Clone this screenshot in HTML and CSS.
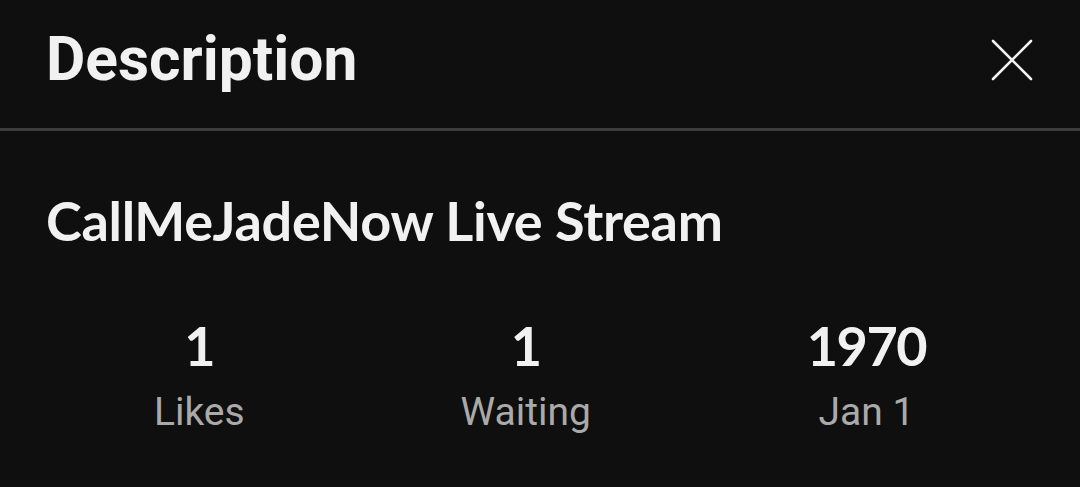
FILE: index.html
```html
<!DOCTYPE html>
<html>
<head>
  <title>Description</title>
  <link rel="stylesheet" href="styles.css">
</head>
<body>

<div class="panel">
  <div class="header">
    <h1 class="header-title">Description</h1>
    <button class="close-btn" aria-label="Close">
      <svg width="42" height="42" viewBox="0 0 42 42">
        <path d="M2 2 L40 40 M40 2 L2 40" stroke="#f1f1f1" stroke-width="2.6" stroke-linecap="round" fill="none"/>
      </svg>
    </button>
  </div>

  <div class="content">
    <h2 class="stream-title">CallMeJadeNow Live Stream</h2>
    <div class="stats">
      <div class="stat">
        <div class="stat-value">1</div>
        <div class="stat-label">Likes</div>
      </div>
      <div class="stat">
        <div class="stat-value">1</div>
        <div class="stat-label">Waiting</div>
      </div>
      <div class="stat">
        <div class="stat-value">1970</div>
        <div class="stat-label">Jan 1</div>
      </div>
    </div>
  </div>
</div>

</body>
</html>
```

FILE: styles.css
```css
body { margin: 0; background: #0f0f0f; color: #f1f1f1; font-family: Roboto, "Liberation Sans", sans-serif; }
.panel { width: 1080px; height: 487px; overflow: hidden; }

.header { display: flex; align-items: center; justify-content: space-between; height: 131px; padding: 0 47px 8px 46px; border-bottom: 3px solid #3d3d3d; box-sizing: border-box; }
.header-title { margin: 0; font-size: 60.5px; font-weight: 700; line-height: 1; }
.close-btn { background: none; border: 0; padding: 0; width: 42px; height: 42px; display: flex; }

.content { padding: 0 46px; }
.stream-title { margin: 0; padding-top: 58px; font-family: Lato, sans-serif; font-size: 54px; font-weight: 700; line-height: 64px; letter-spacing: -0.3px; }

.stats { display: flex; justify-content: space-around; margin-top: 63px; }
.stat { text-align: center; }
.stat-value { font-family: Lato, sans-serif; font-size: 54px; font-weight: 700; line-height: 60px; letter-spacing: -1.5px; }
.stat-label { font-size: 39px; color: #aaaaaa; line-height: 56px; padding-top: 8px; }
```
